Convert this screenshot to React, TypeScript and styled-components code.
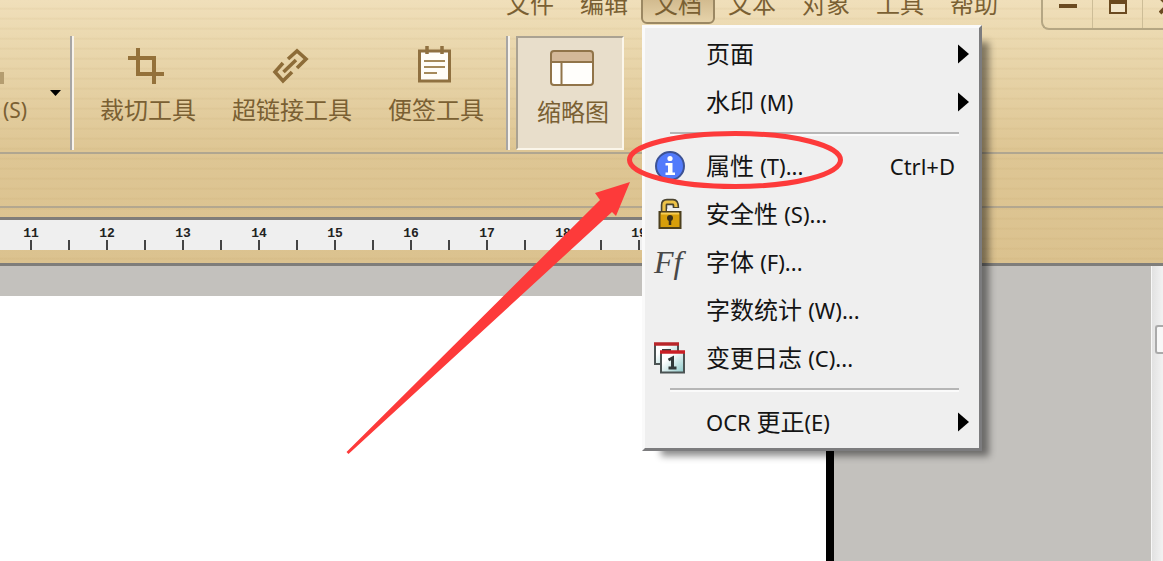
import React from "react";
import styled, { createGlobalStyle, css } from "styled-components";

const cjk = `"Noto Sans", "Noto Sans CJK SC", sans-serif`;

const GlobalStyle = createGlobalStyle`
  * { box-sizing: border-box; }
  html, body { margin: 0; }
  body { overflow: hidden; font-family: ${cjk}; font-size: 24px; line-height: 24px; }
  button { font: inherit; color: inherit; border: 0; padding: 0; background: none; }
  svg { display: block; flex: none; }
`;

const Window = styled.div`
  display: flex;
  flex-direction: column;
  height: 100vh;
  overflow: hidden;
`;

const Chrome = styled.header`
  background:
    repeating-linear-gradient(rgba(150, 110, 40, 0) 0 7px, rgba(150, 110, 40, 0.07) 9px, rgba(150, 110, 40, 0) 10px),
    linear-gradient(#f0dfba 0, #ebd9b0 36px, #dec694 150px, #dbc28f 100%);
  border-bottom: 3px solid #7f7e7b;
  color: #7a6033;
`;

const TitleRow = styled.div`
  display: flex;
  justify-content: flex-end;
  gap: 30px;
  height: 30px;
`;

const MenuBar = styled.nav`
  display: flex;
  margin-top: -12px;
  height: 36px;
`;

const MenuSlot = styled.div`
  position: relative;
`;

const MenuTitle = styled.button<{ $open?: boolean }>`
  width: 74px;
  height: 36px;
  padding-bottom: 4px;
  white-space: nowrap;
  ${(p) =>
    p.$open &&
    css`
      border: 2px solid #9b8863;
      border-radius: 6px;
      background: linear-gradient(#c9b083, #e6d3aa);
    `}
`;

const WindowControls = styled.div`
  display: flex;
  width: 122px;
  height: 30px;
  overflow: hidden;
  border: solid #b5a683;
  border-width: 0 0 2px 2px;
  border-radius: 0 0 0 8px;
`;

const ControlButton = styled.button`
  display: flex;
  justify-content: center;
  flex: 0 0 50px;
  border-right: 1px solid #cdbd97;
`;

const Toolbar = styled.div`
  display: flex;
  height: 124px;
  padding: 6px 0 2px;
  border-bottom: 2px solid #b0a690;
`;

const ToolButton = styled.button<{ $pressed?: boolean }>`
  display: flex;
  flex-direction: column;
  align-items: center;
  gap: 14px;
  padding: 12px 18px 0;
  white-space: nowrap;
  ${(p) =>
    p.$pressed &&
    css`
      padding: 12px 13px 0 19px;
      border: 2px solid;
      border-color: #aaa292 #fbf6ea #fbf6ea #aaa292;
      background: #e8decb;
    `}
`;

const SplitTool = styled.button`
  display: flex;
  flex-direction: column;
  align-items: flex-start;
  gap: 14px;
  width: 40px;
  padding: 12px 0 0 3px;
  font-size: 21px;

  svg { overflow: visible; }
`;

const DropButton = styled.button`
  display: flex;
  align-items: center;
  width: 22px;
  padding-left: 10px;
  margin-right: 8px;
`;

const ToolDivider = styled.span`
  width: 4px;
  margin-right: 6px;
  border-left: 2px solid #a8a6a4;
  border-right: 2px solid #f8f3ea;
`;

const ToolGroup = styled.div`
  display: flex;
  margin: 0 4px 0 2px;
`;

const PropertyBar = styled.div`
  height: 54px;
  border-bottom: 2px solid #b3a78f;
`;

const Ruler = styled.div`
  margin: 9px 317px 13px 0;
  height: 33px;
  overflow: hidden;
  border-top: 3px solid #807d7a;
  background: #efefef;
`;

const Scale = styled.ol`
  display: flex;
  height: 30px;
  margin: 0 0 0 -7px;
  padding: 0;
  list-style: none;
  color: #222;
  font: bold 13px/12px "Liberation Mono", monospace;
`;

const Unit = styled.li`
  flex: 0 0 76px;
  display: flex;
  flex-direction: column;
  justify-content: flex-end;
  text-align: center;
`;

const Ticks = styled.span`
  height: 10px;
  background:
    linear-gradient(#444, #444) 37px 0 / 2px 10px no-repeat,
    linear-gradient(#444, #444) 75px 0 / 1px 10px no-repeat,
    linear-gradient(#444, #444) 0 0 / 1px 10px no-repeat;
`;

const Workspace = styled.main`
  flex: 1;
  display: flex;
  background: #c3c1bd;
`;

const Canvas = styled.div`
  flex: 1;
  display: flex;
  padding: 30px 317px 0 0;
`;

const Sheet = styled.div`
  flex: 1;
  background: #fff;
  border-right: 8px solid #000;
`;

const ScrollTrack = styled.div`
  width: 12px;
  padding: 59px 0 0 3px;
  border-left: 1px solid #f8f8f8;
  background: linear-gradient(90deg, #e2e2e2, #f2f2f2);
`;

const ScrollThumb = styled.div`
  height: 29px;
  border: 2px solid #aaa;
  border-right: 0;
  border-radius: 3px 0 0 3px;
  background: #f8f8f8;
`;

const Dropdown = styled.div`
  position: absolute;
  z-index: 1;
  top: 37px;
  left: 1px;
  width: 340px;
  color: #141414;
`;

const MenuPanel = styled.div`
  padding: 2px 9px;
  border: 3px solid;
  border-color: #fafafa #7c7c7e #7c7c7e #fafafa;
  background: #efefef;
  box-shadow: 13px 11px 7px -6px rgba(0, 0, 0, 0.45);
`;

const MenuItem = styled.button`
  display: flex;
  align-items: center;
  width: 100%;
  height: 48px;
  text-align: left;
  white-space: nowrap;
`;

const IconCell = styled.span`
  flex: 0 0 52px;
  display: flex;
  align-items: center;
  height: 32px;
`;

const FontIcon = styled.span`
  color: #484848;
  font: italic 32px/32px "Liberation Serif", serif;
`;

const Latin = styled.span`
  font-size: 22px;
`;

const Shortcut = styled(Latin)`
  margin: 0 15px 0 auto;
`;

const SubArrow = styled.svg`
  margin: 0 1px 0 auto;
`;

const MenuDivider = styled.hr`
  height: 4px;
  margin: 6px 11px 6px 16px;
  border: solid;
  border-width: 2px 0;
  border-color: #b6b6b6 #fff #fafafa;
`;

const Annotation = styled.svg`
  position: absolute;
  left: -296px;
  top: 105px;
  pointer-events: none;
`;

const CropIcon = () => (
  <svg width="36" height="36" viewBox="0 0 36 36" fill="none" stroke="#94713a" strokeWidth="4" overflow="visible">
    <path d="M8 0V26H34M-2 10H24V36" />
  </svg>
);

const LinkIcon = () => (
  <svg width="36" height="36" viewBox="2 0 36 36" fill="none" stroke="#8d6c38" strokeWidth="3.6" overflow="visible">
    <path d="M11 15L3 24L11 33L20 24M11.500 24L24 12M16 11L25 3L34 11L25 20" />
  </svg>
);

const NoteIcon = () => (
  <svg width="36" height="36" viewBox="2 1 36 36" fill="none" stroke="#8f7040" overflow="visible">
    <path d="M3.500 4H33.500V34H3.500Z" fill="#fffdf8" strokeWidth="3" />
    <path d="M11 -1V7M26 -1V7" strokeWidth="3.500" />
    <path d="M8 14H29M8 20H29M8 26H21" stroke="#a58a5b" strokeWidth="2.200" />
  </svg>
);

const ThumbnailIcon = () => (
  <svg width="44" height="36" viewBox="1 0 44 36" overflow="visible">
    <rect x="1" y="1" width="42" height="34" rx="3" fill="#fffefb" />
    <path d="M1 12V4Q1 1 4 1H40Q43 1 43 4V12Z" fill="#d4b898" />
    <path d="M1 12H43M11.500 12V35" stroke="#917449" strokeWidth="2" />
    <rect x="1" y="1" width="42" height="34" rx="3" fill="none" stroke="#917449" strokeWidth="2" />
  </svg>
);

const InfoIcon = () => (
  <svg width="32" height="32" viewBox="0 0 32 32">
    <circle cx="16" cy="16" r="14" fill="#527bfb" stroke="#3c5294" strokeWidth="2" />
    <circle cx="16" cy="8.500" r="2.600" fill="#fff" />
    <path d="M11.500 13H18.500V22.500H21V25H11.500V22.500H14V15.500H11.500Z" fill="#fff" />
  </svg>
);

const LockIcon = () => (
  <svg width="32" height="32" viewBox="0 0 32 32">
    <path d="M10 14V7Q10 4 13 4H19Q22 4 22 10" fill="none" stroke="#4a4330" strokeWidth="6.500" />
    <path d="M10 14V7Q10 4 13 4H19Q22 4 22 9" fill="none" stroke="#eec348" strokeWidth="3.200" />
    <path d="M13 11H26V13H13Z" fill="#efefef" />
    <rect x="5.500" y="14" width="21" height="16" fill="#d79f0b" stroke="#4c401e" strokeWidth="2" />
    <path d="M7 15.500H25" stroke="#f7cd51" strokeWidth="2" />
    <circle cx="16" cy="20" r="3" fill="#3a311a" />
    <path d="M16 20V27" stroke="#3a311a" strokeWidth="2.500" />
  </svg>
);

const LogIcon = () => (
  <svg width="32" height="32" viewBox="0 0 32 32">
    <defs>
      <linearGradient id="leaf" x1="0" y1="0" x2="1" y2="1">
        <stop offset="0.300" stopColor="#fff" />
        <stop offset="1" stopColor="#8cc9c9" />
      </linearGradient>
    </defs>
    <rect x="1" y="2" width="23" height="20" fill="url(#leaf)" stroke="#4b5353" strokeWidth="2" />
    <path d="M0 2H25" stroke="#b8262a" strokeWidth="3.500" />
    <path d="M9 9V8H16V9" fill="none" stroke="#3d3d3d" strokeWidth="2" />
    <rect x="7" y="10" width="23" height="20.500" fill="url(#leaf)" stroke="#4b5353" strokeWidth="2" />
    <path d="M6 10H31" stroke="#c91f25" strokeWidth="3.500" />
    <path d="M14.500 18L18.500 16V26M14.500 26H22.500" fill="none" stroke="#303838" strokeWidth="3" />
  </svg>
);

type Entry = {
  label?: string;
  latin?: string;
  lead?: string;
  icon?: React.ReactNode;
  shortcut?: string;
  submenu?: boolean;
};

const entries: Entry[] = [
  { label: "页面", submenu: true },
  { label: "水印 ", latin: "(M)", submenu: true },
  {},
  { label: "属性 ", latin: "(T)...", icon: <InfoIcon />, shortcut: "Ctrl+D" },
  { label: "安全性 ", latin: "(S)...", icon: <LockIcon /> },
  { label: "字体 ", latin: "(F)...", icon: <FontIcon aria-hidden="true">Ff</FontIcon> },
  { label: "字数统计 ", latin: "(W)..." },
  { label: "变更日志 ", latin: "(C)...", icon: <LogIcon /> },
  {},
  { lead: "OCR ", label: "更正", latin: "(E)", submenu: true },
];

const DocumentMenu = () => (
  <Dropdown>
    <MenuPanel role="menu" aria-label="文档">
      {entries.map((e, i) =>
        e.label ? (
          <MenuItem key={i} role="menuitem">
            <IconCell>{e.icon}</IconCell>
            <span>
              {e.lead && <Latin>{e.lead}</Latin>}
              {e.label}
              {e.latin && <Latin>{e.latin}</Latin>}
            </span>
            {e.shortcut && <Shortcut>{e.shortcut}</Shortcut>}
            {e.submenu && (
              <SubArrow width="11" height="20" viewBox="0 0 11 20">
                <path d="M0 0.500L11 10L0 19.500Z" />
              </SubArrow>
            )}
          </MenuItem>
        ) : (
          <MenuDivider key={i} />
        )
      )}
    </MenuPanel>
    <Annotation width="500" height="326" viewBox="346 130 500 326" aria-hidden="true">
      <ellipse cx="735" cy="160" rx="105.500" ry="26.500" fill="none" stroke="#fd3a3a" strokeWidth="5" />
      <path d="M346.500 452L600 200L595 193L630 182L616 216L612 212L348.500 454Z" fill="#fd3a3a" />
    </Annotation>
  </Dropdown>
);

const menus = ["文件", "编辑", "文档", "文本", "对象", "工具", "帮助"];
const units = [11, 12, 13, 14, 15, 16, 17, 18, 19];

export default function App() {
  return (
    <Window>
      <GlobalStyle />
      <Chrome>
        <TitleRow>
          <MenuBar>
            {menus.map((m) => (
              <MenuSlot key={m}>
                <MenuTitle $open={m === "文档"}>{m}</MenuTitle>
                {m === "文档" && <DocumentMenu />}
              </MenuSlot>
            ))}
          </MenuBar>
          <WindowControls>
            <ControlButton aria-label="最小化">
              <svg width="18" height="16" viewBox="0 0 18 16">
                <path d="M0 6H18" stroke="#6b4a20" strokeWidth="4" />
              </svg>
            </ControlButton>
            <ControlButton aria-label="还原">
              <svg width="18" height="16" viewBox="0 0 18 16">
                <path d="M1 0V13H17V0" fill="#f3e7cb" stroke="#6b4a20" strokeWidth="2" />
                <path d="M0 0H18V4H0Z" fill="#6b4a20" />
              </svg>
            </ControlButton>
            <ControlButton aria-label="关闭">
              <svg width="18" height="16" viewBox="0 0 18 16">
                <path d="M1 -3L17 13M17 -3L1 13" stroke="#6b4a20" strokeWidth="4" />
              </svg>
            </ControlButton>
          </WindowControls>
        </TitleRow>
        <Toolbar>
          <SplitTool>
            <svg width="36" height="36" viewBox="0 0 36 36">
              <path d="M-3 24H1V36H-3" fill="#b49d70" />
            </svg>
            (S)
          </SplitTool>
          <DropButton aria-label="更多">
            <svg width="11" height="6" viewBox="0 0 11 6">
              <path d="M0 0H11L5.500 6Z" />
            </svg>
          </DropButton>
          <ToolDivider />
          <ToolGroup>
            <ToolButton>
              <CropIcon />
              裁切工具
            </ToolButton>
            <ToolButton>
              <LinkIcon />
              超链接工具
            </ToolButton>
            <ToolButton>
              <NoteIcon />
              便签工具
            </ToolButton>
          </ToolGroup>
          <ToolDivider />
          <ToolButton $pressed aria-pressed="true">
            <ThumbnailIcon />
            缩略图
          </ToolButton>
        </Toolbar>
        <PropertyBar />
        <Ruler>
          <Scale>
            {units.map((u) => (
              <Unit key={u}>
                {u}
                <Ticks />
              </Unit>
            ))}
          </Scale>
        </Ruler>
      </Chrome>
      <Workspace>
        <Canvas>
          <Sheet />
        </Canvas>
        <ScrollTrack>
          <ScrollThumb />
        </ScrollTrack>
      </Workspace>
    </Window>
  );
}
